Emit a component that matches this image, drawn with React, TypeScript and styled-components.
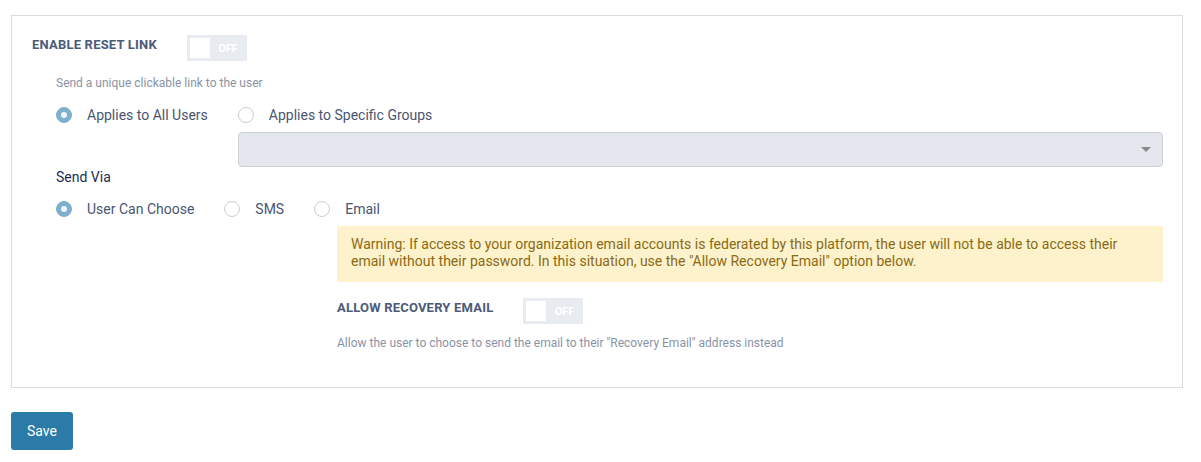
import React from "react";
import styled, { createGlobalStyle } from "styled-components";

const Global = createGlobalStyle`
  html, body { margin: 0; padding: 0; background: #fff; }
  body { font-family: Roboto, "Noto Sans", Arial, sans-serif; }
  * { box-sizing: border-box; }
`;

const Page = styled.div`
  padding: 15px 18px 12px 11px;
`;

const Panel = styled.div`
  border: 1px solid #dcdcdc;
  padding: 19px 19px 36px 20px;
`;

const SettingRow = styled.div`
  display: flex;
  align-items: flex-start;
`;

const SettingLabel = styled.div`
  font-size: 13px;
  font-weight: 700;
  color: #4b5a78;
  line-height: 16px;
  padding-top: 2px;
  margin-right: 30px;
  letter-spacing: 0.2px;
`;

const Toggle = styled.div`
  width: 60px;
  height: 26px;
  background: #e8ebf0;
  position: relative;
  display: flex;
  align-items: center;
  justify-content: flex-end;
  padding-right: 9px;
  font-size: 11px;
  font-weight: 700;
  color: #fff;
`;

const Knob = styled.span`
  position: absolute;
  left: 3px;
  top: 3px;
  width: 20px;
  height: 20px;
  background: #fff;
`;

const Indented = styled.div`
  margin-left: 24px;
`;

const Description = styled.div<{ $mt: number }>`
  font-size: 12px;
  color: #8a93a6;
  line-height: 15px;
  margin-top: ${(p) => p.$mt}px;
`;

const RadioRow = styled.div<{ $mt: number }>`
  display: flex;
  align-items: flex-start;
  margin-top: ${(p) => p.$mt}px;
`;

const Option = styled.label`
  display: flex;
  align-items: center;
  height: 20px;
  margin-right: 30px;
  font-size: 14px;
  color: #4a5573;
  white-space: nowrap;
`;

const RadioCircle = styled.span<{ $checked?: boolean }>`
  width: 16px;
  height: 16px;
  border-radius: 50%;
  margin-right: 15px;
  flex: none;
  display: flex;
  align-items: center;
  justify-content: center;
  background: ${(p) => (p.$checked ? "#7eafcc" : "#fff")};
  border: 1px solid ${(p) => (p.$checked ? "#7eafcc" : "#c9cdd5")};
  &::after {
    content: "";
    display: ${(p) => (p.$checked ? "block" : "none")};
    width: 6px;
    height: 6px;
    border-radius: 50%;
    background: #f2f6fa;
  }
`;

const GroupColumn = styled.div`
  flex: 1;
  display: flex;
  flex-direction: column;
`;

const Select = styled.div`
  margin-top: 7px;
  margin-bottom: 2px;
  height: 35px;
  background: #e4e7ee;
  border: 1px solid #cdcfd4;
  border-radius: 4px;
  display: flex;
  align-items: center;
  justify-content: flex-end;
  padding-right: 11px;
`;

const Caret = styled.span`
  width: 0;
  height: 0;
  border-left: 5px solid transparent;
  border-right: 5px solid transparent;
  border-top: 5px solid #8a8a8a;
`;

const SectionTitle = styled.div`
  font-size: 14px;
  color: #1e2c4f;
  line-height: 17px;
`;

const Sub = styled.div`
  margin-left: 281px;
`;

const Warning = styled.div`
  margin-top: 7px;
  background: #fef2cc;
  color: #8a6a12;
  font-size: 14px;
  line-height: 17px;
  padding: 10px 14px 12px 14px;
`;

const Spacer = styled.div<{ $h: number }>`
  height: ${(p) => p.$h}px;
`;

const SaveButton = styled.button`
  margin-top: 24px;
  width: 62px;
  height: 38px;
  background: #2a7ba8;
  border: none;
  border-radius: 3px;
  color: #fff;
  font-family: Roboto, Arial, sans-serif;
  font-size: 14px;
  padding: 0;
`;

const Radio = ({ checked, label }: { checked?: boolean; label: string }) => (
  <Option>
    <RadioCircle $checked={checked} />
    {label}
  </Option>
);

export default function App() {
  return (
    <Page>
      <Global />
      <Panel>
        <SettingRow>
          <SettingLabel>ENABLE RESET LINK</SettingLabel>
          <Toggle>
            <Knob />
            OFF
          </Toggle>
        </SettingRow>
        <Indented>
          <Description $mt={15}>Send a unique clickable link to the user</Description>
          <RadioRow $mt={14}>
            <Radio checked label="Applies to All Users" />
            <GroupColumn>
              <Radio label="Applies to Specific Groups" />
              <Select>
                <Caret />
              </Select>
            </GroupColumn>
          </RadioRow>
          <SectionTitle>Send Via</SectionTitle>
          <RadioRow $mt={13}>
            <Radio checked label="User Can Choose" />
            <Radio label="SMS" />
            <Radio label="Email" />
          </RadioRow>
          <Sub>
            <Warning>
              Warning: If access to your organization email accounts is federated by this platform, the user will not be able to access their email without their password. In this situation, use the "Allow Recovery Email" option below.
            </Warning>
            <Spacer $h={16} />
            <SettingRow>
              <SettingLabel>ALLOW RECOVERY EMAIL</SettingLabel>
              <Toggle>
                <Knob />
                OFF
              </Toggle>
            </SettingRow>
            <Description $mt={12}>
              Allow the user to choose to send the email to their "Recovery Email" address instead
            </Description>
          </Sub>
        </Indented>
      </Panel>
      <SaveButton>Save</SaveButton>
    </Page>
  );
}
